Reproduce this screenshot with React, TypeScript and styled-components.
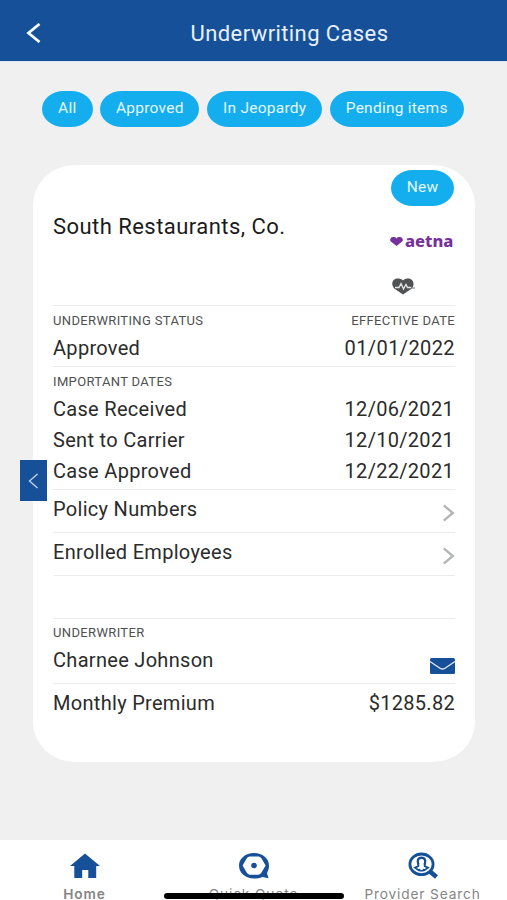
import React from "react";
import styled, { createGlobalStyle } from "styled-components";

const BLUE = "#155099";
const SKY = "#14aeef";

const GlobalStyle = createGlobalStyle`
  *, *::before, *::after { box-sizing: border-box; }
  body { margin: 0; background: #f0f0f0; font-family: Roboto, "Liberation Sans", sans-serif; overflow: hidden; }
  button { font: inherit; border: 0; padding: 0; background: none; }
  svg { display: block; flex: none; }
`;

const Screen = styled.div`
  display: flex;
  flex-direction: column;
  width: 507px;
  height: 900px;
  background: #f0f0f0;
  overflow: hidden;
`;

const Header = styled.header`
  display: grid;
  grid-template-columns: 72px 1fr;
  align-items: center;
  height: 62px;
  flex: none;
  padding-top: 5px;
  background: ${BLUE};
  border-bottom: 1px solid #dfe5f5;
`;

const BackButton = styled.button`
  padding-left: 26px;
`;

const Title = styled.h1`
  margin: 0;
  padding-top: 1px;
  text-align: center;
  font-size: 22px;
  line-height: 28px;
  font-weight: 400;
  letter-spacing: 0.4px;
  color: #e9f0fc;
`;

const Filters = styled.nav`
  display: flex;
  gap: 7.7px;
  margin: 29px 0 0 42px;
`;

const Pill = styled.button<{ $width: number }>`
  width: ${(p) => p.$width}px;
  height: 36px;
  flex: none;
  border-radius: 22px / 18px;
  background: ${SKY};
  color: #e4f6fe;
  font-size: 15.5px;
  line-height: 34px;
  padding-bottom: 2px;
  letter-spacing: 0.25px;
  text-align: center;
  white-space: nowrap;
`;

const Body = styled.div`
  display: flex;
  align-items: flex-start;
  margin-top: 38px;
  padding-left: 20px;
`;

const DrawerTab = styled.button`
  display: flex;
  align-items: center;
  justify-content: center;
  width: 27px;
  height: 41px;
  margin-top: 295px;
  margin-right: -14px;
  z-index: 1;
  background: ${BLUE};
`;

const Card = styled.article`
  width: 442px;
  height: 597px;
  padding: 0 20px;
  border-radius: 42px / 40px;
  background: #fff;
`;

const Section = styled.section<{ $height: number; $top?: number; $last?: boolean }>`
  height: ${(p) => p.$height}px;
  padding-top: ${(p) => p.$top ?? 0}px;
  border-bottom: ${(p) => (p.$last ? 0 : 1)}px solid #ebebeb;
`;

const CaseHead = styled(Section)`
  display: grid;
  grid-template-columns: 1fr 64px;
`;

const Company = styled.h2`
  margin: 46px 0 0;
  font-size: 22px;
  line-height: 32px;
  font-weight: 400;
  letter-spacing: 0.45px;
  color: #1b1b1b;
`;

const HeadSide = styled.div`
  display: flex;
  flex-direction: column;
  align-items: flex-start;
`;

const Carrier = styled.div`
  display: flex;
  align-items: center;
  gap: 2px;
  height: 18px;
  margin: 21px 0 0 -1px;
  color: #76319a;
  font-family: "Noto Sans", sans-serif;
  font-weight: 800;
  font-size: 16.5px;
  line-height: 18px;
  letter-spacing: 0;
`;

const CoverageIcon = styled.div`
  margin-top: 28px;
`;

const Row = styled.div<{ $height?: number; $inset?: number }>`
  display: flex;
  justify-content: space-between;
  align-items: center;
  height: ${(p) => p.$height ?? 31}px;
  padding-right: ${(p) => p.$inset ?? 0}px;
`;

const Caption = styled.span`
  font-size: 13px;
  line-height: 16px;
  letter-spacing: 0.35px;
  color: #505050;
`;

const Text = styled.span<{ $track?: number }>`
  font-size: 20px;
  line-height: 26px;
  letter-spacing: ${(p) => p.$track ?? 0.3}px;
  color: #2b2b2b;
  white-space: nowrap;
`;

const RowIcon = styled.span<{ $drop: number }>`
  display: block;
  margin-top: ${(p) => p.$drop}px;
`;

const TabBar = styled.nav`
  display: grid;
  grid-template-columns: repeat(3, 169px);
  height: 60px;
  flex: none;
  margin-top: auto;
  background: #fff;
  position: relative;
`;

const Tab = styled.div`
  display: flex;
  flex-direction: column;
  align-items: center;
  padding-top: 12px;
`;

const TabLabel = styled.span<{ $strong?: boolean }>`
  margin-top: 9px;
  font-family: Inter, "Liberation Sans", sans-serif;
  font-size: 13.7px;
  line-height: 12px;
  font-weight: ${(p) => (p.$strong ? 600 : 400)};
  letter-spacing: 0.85px;
  color: #858585;
  white-space: nowrap;
`;

const HomeIndicator = styled.div`
  position: absolute;
  left: 164px;
  top: 53px;
  width: 180px;
  height: 6px;
  border-radius: 3px;
  background: #000;
`;

const filters = [
  { label: "All", width: 50.5 },
  { label: "Approved", width: 99.3 },
  { label: "In Jeopardy", width: 115 },
  { label: "Pending items", width: 133.7 },
];

const dates = [
  ["Case Received", "12/06/2021"],
  ["Sent to Carrier", "12/10/2021"],
  ["Case Approved", "12/22/2021"],
];

const RightChevron = () => (
  <svg width="12" height="18" viewBox="0 0 12 18" fill="none" stroke="#b3b6b9" strokeWidth="2.4">
    <path d="M.8 1.300 9.800 9 .8 16.700" />
  </svg>
);

const PersonSearch = () => (
  <svg width="30" height="27" viewBox="0 0 30 27" fill="none" stroke={BLUE}>
    <ellipse cx="13.500" cy="12.300" rx="11.600" ry="10.300" strokeWidth="2.800" />
    <path d="M22 19.500 28.500 25" strokeWidth="4.600" />
    <path d="M10.300 12.500C8.700 7.500 10.500 5.800 13.500 5.800s4.800 1.700 3.200 6.700" strokeWidth="2.400" />
    <path d="M10.300 11.500v2.600l-3.300 1.600 3.500 2.500 1.500-1M16.700 11.500v2.600l3.300 1.600-3.500 2.500-1.500-1" strokeWidth="1.800" />
    <path d="M10.500 18c2 1 4 1 6 0" strokeWidth="1.500" />
  </svg>
);

export default function App() {
  return (
    <Screen>
      <GlobalStyle />
      <Header>
        <BackButton aria-label="Back">
          <svg width="15" height="20" viewBox="0 0 15 20" fill="none" stroke="#f4f8ff" strokeWidth="2.800">
            <path d="M13.500 1 2.500 10l11 9" />
          </svg>
        </BackButton>
        <Title>Underwriting Cases</Title>
      </Header>

      <Filters>
        {filters.map((f) => (
          <Pill key={f.label} $width={f.width}>{f.label}</Pill>
        ))}
      </Filters>

      <Body>
        <DrawerTab aria-label="Open drawer">
          <svg width="11" height="16" viewBox="0 0 11 16" fill="none" stroke="#c9d7ee" strokeWidth="1.300">
            <path d="M9.500 1 1.500 8l8 7" />
          </svg>
        </DrawerTab>
        <Card>
          <CaseHead $height={141}>
            <Company>South Restaurants, Co.</Company>
            <HeadSide>
              <Row $height={46}>
                <Pill $width={63}>New</Pill>
              </Row>
              <Carrier>
                <svg width="13" height="10" viewBox="0 0 14 11" preserveAspectRatio="none" fill="#76319a">
                  <path d="M7 11 .6 5.800C-.6 4.100.8 1 3.300 1 5 1 6.300 1.500 7 2.700 7.700 1.500 9 1 10.700 1c2.500 0 3.900 3.100 2.700 4.800z" />
                </svg>
                aetna
              </Carrier>
              <CoverageIcon>
                <svg width="25" height="17" viewBox="0 0 25 17">
                  <path d="M12 16.500 3.200 10.500C-.8 6 2 .5 6.200.5c2.600 0 4.600.6 5.800 2C13.200 1.100 15.200.5 17.500.5c4.200 0 7 5.500 3.300 10z" fill="#505254" />
                  <path d="M4 9.500H8l2-4 2.500 5.500 2.500-4.500 1.500 3H20" fill="none" stroke="#e4e4e4" strokeWidth="1.300" />
                  <path d="M20 10h4" stroke="#8b8b8b" strokeWidth="1.200" />
                </svg>
              </CoverageIcon>
            </HeadSide>
          </CaseHead>

          <Section $height={61} $top={6}>
            <Row $height={18}>
              <Caption>UNDERWRITING STATUS</Caption>
              <Caption>EFFECTIVE DATE</Caption>
            </Row>
            <Row $height={36}>
              <Text>Approved</Text>
              <Text $track={0.4}>01/01/2022</Text>
            </Row>
          </Section>

          <Section $height={123} $top={6}>
            <Row $height={18}>
              <Caption>IMPORTANT DATES</Caption>
            </Row>
            <Row $height={2} />
            {dates.map(([label, value]) => (
              <Row key={label} $inset={1}>
                <Text>{label}</Text>
                <Text $track={0.3}>{value}</Text>
              </Row>
            ))}
          </Section>

          <Section $height={43}>
            <Row $height={38}>
              <Text>Policy Numbers</Text>
              <RowIcon $drop={8}><RightChevron /></RowIcon>
            </Row>
          </Section>
          <Section $height={43}>
            <Row $height={38}>
              <Text>Enrolled Employees</Text>
              <RowIcon $drop={8}><RightChevron /></RowIcon>
            </Row>
          </Section>
          <Section $height={43} />

          <Section $height={65} $top={5}>
            <Row $height={18}>
              <Caption>UNDERWRITER</Caption>
            </Row>
            <Row $height={36}>
              <Text>Charnee Johnson</Text>
              <RowIcon $drop={11}>
                <svg width="25" height="16" viewBox="0 0 25 16">
                  <rect width="25" height="16" rx="1.500" fill={BLUE} />
                  <path d="M0 3.500 10 10.200q2.500 1.600 5 0L25 3.500" fill="none" stroke="#e4ebf5" strokeWidth="1.300" />
                </svg>
              </RowIcon>
            </Row>
          </Section>

          <Section $height={60} $last>
            <Row $height={38}>
              <Text>Monthly Premium</Text>
              <Text>$1285.82</Text>
            </Row>
          </Section>
        </Card>
      </Body>

      <TabBar>
        <Tab>
          <svg width="30" height="27" viewBox="0 0 30 27" fill={BLUE}>
            <path d="M15 1.500 30 14H26.200V26H18.300V18H12.200V26H4.300V14H0z" />
          </svg>
          <TabLabel $strong>Home</TabLabel>
        </Tab>
        <Tab>
          <svg width="30" height="27" viewBox="0 0 30 27">
            <path fillRule="evenodd" fill={BLUE} d="M15 1C23.500 1 30 6.500 30 13.500c0 3.500-1.100 5.700-2 7.500l1.500 5.200-6-1.200C21 26.300 18 26.500 15 26.500 6.500 26.500 0 21 0 13.500 0 6.500 6.500 1 15 1zM10.500 4.600Q8.500 5 7.500 6.800L3.600 13.500 7.500 20.300Q8.500 22.200 10.500 22.700H19.700Q21.700 22.200 22.700 20.300L26.600 13.500 22.700 6.800Q21.700 5 19.700 4.600z" />
            <circle cx="15" cy="13.500" r="2.800" fill={BLUE} />
          </svg>
          <TabLabel>Quick Quote</TabLabel>
        </Tab>
        <Tab>
          <PersonSearch />
          <TabLabel>Provider Search</TabLabel>
        </Tab>
        <HomeIndicator />
      </TabBar>
    </Screen>
  );
}
